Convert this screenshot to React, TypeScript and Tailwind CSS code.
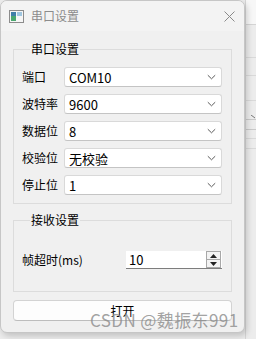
import type { ReactNode } from 'react';

const font = { fontFamily: '"Noto Sans CJK SC", "Noto Sans", sans-serif' };

const fields = [
  { label: '端口', value: 'COM10' },
  { label: '波特率', value: '9600' },
  { label: '数据位', value: '8' },
  { label: '校验位', value: '无校验' },
  { label: '停止位', value: '1' },
];

function Chevron() {
  return (
    <svg width="9" height="6" viewBox="0 0 9 6" className="shrink-0">
      <path d="M0.8 1.2 L4.5 4.8 L8.2 1.2" fill="none" stroke="#5a5a5a" strokeWidth="1" />
    </svg>
  );
}

function Combo({ value }: { value: string }) {
  return (
    <div className="flex-1 h-[20px] bg-white border border-[#d9d9d9] border-b-[#c4c4c4] rounded-[3px] flex items-center justify-between pl-[4px] pr-[5px]">
      <span className="text-[13px] leading-none text-black">{value}</span>
      <Chevron />
    </div>
  );
}

function Group({ title, children, className }: { title: string; children: ReactNode; className?: string }) {
  return (
    <fieldset className={`mx-[12px] border border-[#dcdcdc] ${className ?? ''}`}>
      <legend className="ml-[8px] px-[1px] text-[12px] leading-[14px] text-black">{title}</legend>
      {children}
    </fieldset>
  );
}

function SpinBox() {
  return (
    <div className="w-[96px] h-[18px] bg-white border-b border-[#7d7d7d] flex items-center justify-between">
      <span className="pl-[3px] text-[13px] leading-none text-black">10</span>
      <div className="flex flex-col w-[15px] h-[17px] mr-[1px]">
        <div className="flex-1 border border-[#a8a8a8] bg-[#f3f3f3] flex items-center justify-center">
          <svg width="7" height="4" viewBox="0 0 7 4"><path d="M3.5 0 L7 4 L0 4 Z" fill="#222" /></svg>
        </div>
        <div className="flex-1 border border-t-0 border-[#a8a8a8] bg-[#f3f3f3] flex items-center justify-center">
          <svg width="7" height="4" viewBox="0 0 7 4"><path d="M0 0 L7 0 L3.5 4 Z" fill="#222" /></svg>
        </div>
      </div>
    </div>
  );
}

export default function App() {
  return (
    <div className="relative w-[256px] h-[339px] overflow-hidden bg-[#ececec] flex" style={font}>
      {/* dialog window */}
      <div className="w-[245px] h-[333px] shrink-0 rounded-[7px] border border-[#c6c6c6] bg-[#f0f0f0] overflow-hidden shadow-[2px_3px_6px_rgba(0,0,0,0.18)] z-10 flex flex-col">
        <div className="h-[30px] bg-[#f3f3f3] flex items-center pl-[8px] pr-[9px]">
          <svg width="15" height="13" viewBox="0 0 15 13" className="shrink-0">
            <rect x="0.5" y="0.5" width="14" height="12" fill="#f6f6f6" stroke="#8c8c8c" />
            <rect x="2" y="2" width="5" height="9" fill="#3f7fa8" />
            <rect x="2" y="6" width="5" height="5" fill="#4aa870" />
            <rect x="8" y="2" width="5" height="4" fill="#9fc6e0" />
          </svg>
          <span className="ml-[7px] text-[12px] leading-none text-[#8c8c8c]">串口设置</span>
          <svg width="11" height="11" viewBox="0 0 11 11" className="ml-auto">
            <path d="M0.5 0.5 L10.5 10.5 M10.5 0.5 L0.5 10.5" stroke="#8a8a8a" strokeWidth="1" />
          </svg>
        </div>

        <Group title="串口设置" className="mt-[11px] pt-[11px] pb-[8px] pl-[8px] pr-[9px]">
          <div className="flex flex-col gap-[7px]">
            {fields.map((f) => (
              <div key={f.label} className="flex items-center">
                <span className="w-[42px] shrink-0 text-[12px] leading-none text-black">{f.label}</span>
                <Combo value={f.value} />
              </div>
            ))}
          </div>
        </Group>

        <Group title="接收设置" className="mt-[9px] pt-[24px] pb-[22px] pl-[8px] pr-[9px]">
          <div className="flex items-center justify-between">
            <span className="text-[12px] leading-none text-black">帧超时(ms)</span>
            <SpinBox />
          </div>
        </Group>

        <button className="mx-[12px] mt-[8px] h-[21px] rounded-[4px] border border-[#d3d3d3] border-b-[#bdbdbd] bg-[#fdfdfd] text-[12px] leading-none text-black">
          打开
        </button>
      </div>

      {/* window behind the dialog */}
      <div className="flex-1 flex flex-col border-l border-[#d6d6d6]">
        <div className="h-[25px] bg-[#f7f7f7] border-b border-[#d4d4d4]" />
        <div className="h-[33px] border-b border-[#d9d9d9]" />
        <div className="h-[18px] border-b border-[#d9d9d9]" />
        <div className="h-[25px] border-b border-[#d9d9d9]" />
        <div className="h-[19px] border-b border-[#c9c9c9] flex items-end justify-end">
          <svg width="5" height="4" viewBox="0 0 5 4"><path d="M0 0 L4 3" stroke="#777" /></svg>
        </div>
        <div className="h-[10px] border-b border-[#c9c9c9]" />
        <div className="h-[9px] border-b border-[#d9d9d9]" />
        <div className="h-[10px] border-b border-[#d9d9d9]" />
      </div>

      {/* watermark */}
      <span className="absolute left-[90px] top-[311px] z-20 text-[17px] tracking-[0.4px] leading-none text-[#8a8a8a]/80 whitespace-nowrap">
        CSDN @魏振东991
      </span>
    </div>
  );
}
